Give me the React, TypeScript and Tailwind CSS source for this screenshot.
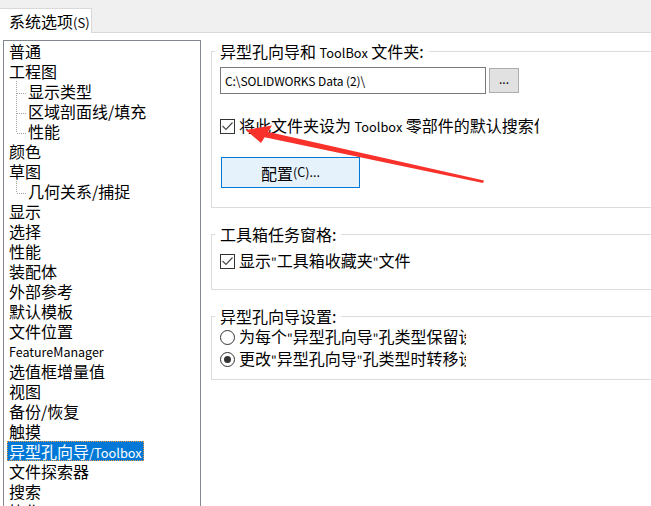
import type { ReactNode } from "react";

type TreeItem = {
  label: ReactNode;
  child?: boolean;
  last?: boolean;
  selected?: boolean;
};

const treeItems: TreeItem[] = [
  { label: "普通" },
  { label: "工程图" },
  { label: "显示类型", child: true },
  { label: "区域剖面线/填充", child: true },
  { label: "性能", child: true, last: true },
  { label: "颜色" },
  { label: "草图" },
  { label: "几何关系/捕捉", child: true, last: true },
  { label: "显示" },
  { label: "选择" },
  { label: "性能" },
  { label: "装配体" },
  { label: "外部参考" },
  { label: "默认模板" },
  { label: "文件位置" },
  { label: <span className="text-[12.5px]">FeatureManager</span> },
  { label: "选值框增量值" },
  { label: "视图" },
  { label: "备份/恢复" },
  { label: "触摸" },
  {
    label: (
      <>
        异型孔向导<span className="text-[12.8px]">/Toolbox</span>
      </>
    ),
    selected: true,
  },
  { label: "文件探索器" },
  { label: "搜索" },
  { label: "协作" },
];

export default function App() {
  return (
    <div className="relative h-[506px] w-[651px] overflow-hidden bg-white font-['Noto_Sans_CJK_SC',sans-serif] text-[16px] text-black">
      {/* tab strip */}
      <div className="flex h-[33px] bg-[#f0f0f0] pt-[8px]">
        <div className="h-[25px] w-[92px] border-t border-r border-[#d9d9d9] bg-white pl-[9px] leading-[24px]">
          系统选项<span className="text-[13px]">(S)</span>
        </div>
        <div className="h-[25px] flex-1 border-b border-[#d9d9d9]" />
      </div>

      <div className="flex">
        <OptionTree />

        <div className="ml-[10px] mt-[18px] flex flex-col">
          <Group
            className="h-[157px]"
            legend={
              <>
                异型孔向导和 <span className="text-[12.8px]">ToolBox</span> 文件夹:
              </>
            }
          >
            <div className="mt-[5px] flex pl-[8px]">
              <div className="flex h-[27px] w-[266px] items-center border border-[#7a7a7a] pl-[4px] text-[12px] tracking-[-0.1px]">
                {"C:\\SOLIDWORKS Data (2)\\"}
              </div>
              <div className="ml-[3px] mt-[1px] flex h-[25px] w-[30px] items-center justify-center border border-[#adadad] bg-[#e1e1e1] pb-[4px] text-[12px]">
                ...
              </div>
            </div>
            <div className="mt-[22px] flex h-[20px] items-center pl-[8px]">
              <CheckBox />
              <span className="ml-[4px] w-[300px] overflow-hidden whitespace-nowrap leading-[20px]">
                将此文件夹设为 <span className="text-[12.8px]">Toolbox</span>{" "}
                零部件的默认搜索位置
              </span>
            </div>
            <div className="ml-[9px] mt-[21px] flex h-[31px] w-[139px] items-center justify-center border border-[#0078d7] bg-[#e5f1fb]">
              配置<span className="text-[12.5px]">(C)...</span>
            </div>
          </Group>

          <Group className="mt-[26px] h-[56px]" legend="工具箱任务窗格:">
            <div className="mt-[6px] flex h-[20px] items-center pl-[8px]">
              <CheckBox />
              <span className="ml-[4px] w-[172px] overflow-hidden whitespace-nowrap leading-[20px]">
                显示<Quote />工具箱收藏夹<Quote />文件夹
              </span>
            </div>
          </Group>

          <Group className="mt-[26px] h-[64px]" legend="异型孔向导设置:">
            <div className="flex h-[20px] items-center pl-[8px]">
              <Radio />
              <span className="ml-[4px] w-[227px] overflow-hidden whitespace-nowrap leading-[20px]">
                为每个<Quote />异型孔向导<Quote />孔类型保留设置
              </span>
            </div>
            <div className="mt-[2px] flex h-[20px] items-center pl-[8px]">
              <Radio checked />
              <span className="ml-[4px] w-[227px] overflow-hidden whitespace-nowrap leading-[20px]">
                更改<Quote />异型孔向导<Quote />孔类型时转移设置
              </span>
            </div>
          </Group>
        </div>
      </div>

      {/* red annotation arrow */}
      <svg
        className="pointer-events-none absolute left-0 top-0"
        width="651"
        height="506"
        viewBox="0 0 651 506"
      >
        <polygon points="262,130.5 484,180.5 483,183 261,136.5" fill="#f8312b" />
        <polygon points="246,130 272,125.5 261,143" fill="#f8312b" />
      </svg>
    </div>
  );
}

function OptionTree() {
  return (
    <div className="ml-[3px] mt-[7px] h-[480px] w-[198px] shrink-0 overflow-hidden border border-[#828790]">
      {treeItems.map((item, i) => (
        <div
          key={i}
          className={
            item.child
              ? "flex h-[20px] items-center pl-[12px]"
              : "flex h-[20px] items-center pl-[3px]"
          }
        >
          {item.child && (
            <svg width="10" height="20" viewBox="0 0 10 20" className="shrink-0">
              <line
                x1="0.5"
                y1="0"
                x2="0.5"
                y2={item.last ? 12 : 20}
                stroke="#a0a0a0"
                strokeDasharray="1 1"
              />
              <line
                x1="1"
                y1="12.5"
                x2="10"
                y2="12.5"
                stroke="#a0a0a0"
                strokeDasharray="1 1"
              />
            </svg>
          )}
          <span
            className={
              item.selected
                ? "h-[20px] whitespace-nowrap border border-dotted border-[#e89a3c] bg-[#0078d7] px-[1px] leading-[18px] text-white"
                : "whitespace-nowrap px-[2px] leading-[20px]"
            }
          >
            {item.label}
          </span>
        </div>
      ))}
    </div>
  );
}

function Group({
  legend,
  className,
  children,
}: {
  legend: ReactNode;
  className?: string;
  children?: ReactNode;
}) {
  return (
    <div className={`w-[460px] border border-[#dcdcdc] ${className ?? ""}`}>
      <div className="-mt-[12px] ml-[3px] h-[22px] w-fit whitespace-nowrap bg-white px-[5px] leading-[22px]">
        {legend}
      </div>
      {children}
    </div>
  );
}

function Quote() {
  return <span className="text-[12px]">"</span>;
}

function CheckBox() {
  return (
    <span className="flex h-[15px] w-[15px] shrink-0 items-center justify-center border border-[#333333] bg-white">
      <svg width="13" height="13" viewBox="0 0 13 13">
        <path
          d="M1.5 6 L5 9.5 L11.5 2.5"
          fill="none"
          stroke="#4a4a4a"
          strokeWidth="1.2"
        />
      </svg>
    </span>
  );
}

function Radio({ checked }: { checked?: boolean }) {
  return (
    <span className="flex h-[15px] w-[15px] shrink-0 items-center justify-center rounded-full border border-[#333333] bg-white">
      {checked && <span className="h-[7px] w-[7px] rounded-full bg-[#333333]" />}
    </span>
  );
}
